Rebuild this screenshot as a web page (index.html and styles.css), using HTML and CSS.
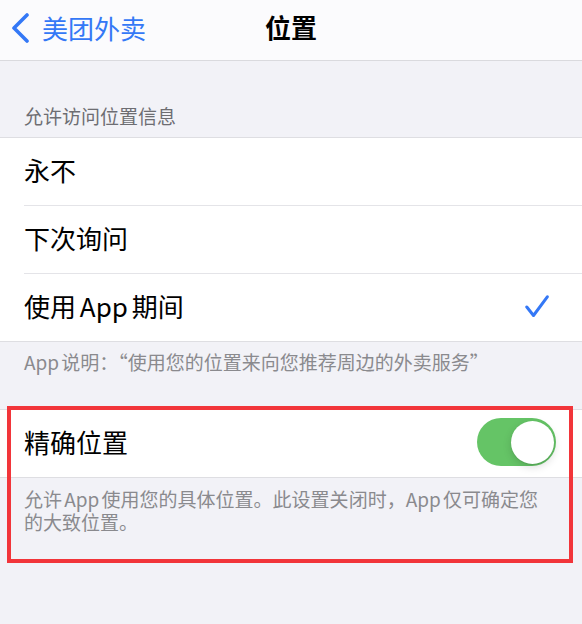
FILE: index.html
```html
<!DOCTYPE html>
<html lang="zh-CN">
<head>
<meta charset="UTF-8">
<meta name="viewport" content="width=device-width, initial-scale=1.0">
<title>位置</title>
<link rel="stylesheet" href="styles.css">
</head>
<body>
	<div class="nav">
		<a class="back" href="#">
			<svg class="chevron" width="20" height="30" viewBox="0 0 20 30">
				<path d="M16 2 L3 15 L16 28" fill="none" stroke="#3478f6" stroke-width="3.6" stroke-linecap="round" stroke-linejoin="round"/>
			</svg>
			<span>美团外卖</span>
		</a>
		<div class="title">位置</div>
		<div></div>
	</div>

	<div class="section-header">允许访问位置信息</div>
	<ul class="group">
		<li class="row"><div class="row-inner">永不</div></li>
		<li class="row"><div class="row-inner">下次询问</div></li>
		<li class="row">
			<div class="row-inner">
				<span>使用 App 期间</span>
				<svg class="check" width="24" height="24" viewBox="0 0 24 24">
					<path d="M1.8 13 L8.5 21.5 L22.3 2.8" fill="none" stroke="#3478f6" stroke-width="3" stroke-linecap="round" stroke-linejoin="round"/>
				</svg>
			</div>
		</li>
	</ul>
	<div class="section-footer">App 说明：“使用您的位置来向您推荐周边的外卖服务”</div>

	<div class="marked">
		<ul class="group group-single">
			<li class="row">
				<div class="row-inner">
					<span>精确位置</span>
					<div class="switch on"><div class="knob"></div></div>
				</div>
			</li>
		</ul>
		<div class="section-footer multi">允许 App 使用您的具体位置。此设置关闭时，App 仅可确定您的大致位置。</div>
		<div class="mark-box"></div>
	</div>
</body>
</html>
```

FILE: styles.css
```css
body {
	margin: 0;
	background: #f2f2f7;
	font-family: "Noto Sans CJK SC", "Noto Sans", sans-serif;
	word-spacing: -2px;
	color: #000;
}
ul {
	margin: 0;
	padding: 0;
	list-style: none;
}

/* top bar */
.nav {
	display: grid;
	grid-template-columns: 1fr auto 1fr;
	align-items: center;
	height: 60px;
	background: #fbfbfd;
	border-bottom: 1px solid #dadade;
}
.back {
	display: flex;
	align-items: center;
	padding-left: 11px;
	color: #3478f6;
	text-decoration: none;
	font-size: 26px;
	line-height: 30px;
	margin-top: -4px;
}
.back span {
	margin-left: 11px;
}
.title {
	font-size: 26px;
	font-weight: 700;
	line-height: 30px;
	margin-top: -6px;
}

/* grouped list */
.section-header {
	padding: 43px 24px 9px;
	font-size: 19px;
	line-height: 24px;
	color: #6d6d72;
}
.group {
	background: #fff;
	border-top: 1px solid #dedee2;
	border-bottom: 1px solid #dedee2;
}
.row {
	padding-left: 24px;
}
.row-inner {
	display: flex;
	align-items: center;
	justify-content: space-between;
	height: 64px;
	padding: 0 33px 3px 0;
	border-bottom: 1px solid #e4e4e8;
	font-size: 26px;
	line-height: 30px;
}
.row:last-child .row-inner {
	border-bottom: none;
}
.section-footer {
	padding: 8px 24px 1px;
	font-size: 19px;
	line-height: 24px;
	color: #8a8a8e;
}
.section-footer.multi {
	padding-top: 9px;
	padding-right: 36px;
	line-height: 23px;
}

/* second block with the toggle */
.marked {
	position: relative;
	margin-top: 34px;
	padding-bottom: 29px;
}
.group-single .row-inner {
	padding-right: 26px;
}
.switch {
	position: relative;
	width: 79px;
	height: 48px;
	border-radius: 24px;
	background: #e9e9eb;
}
.switch.on {
	background: #65c466;
}
.knob {
	position: absolute;
	top: 2.5px;
	right: 2.5px;
	width: 43px;
	height: 43px;
	border-radius: 50%;
	background: #fff;
	box-shadow: 0 3px 8px rgba(0, 0, 0, 0.15), 0 1px 1px rgba(0, 0, 0, 0.08);
}
.mark-box {
	position: absolute;
	top: -3px;
	bottom: 0;
	left: 7px;
	right: 9px;
	box-sizing: border-box;
	border: 4px solid #f2353a;
}
```
